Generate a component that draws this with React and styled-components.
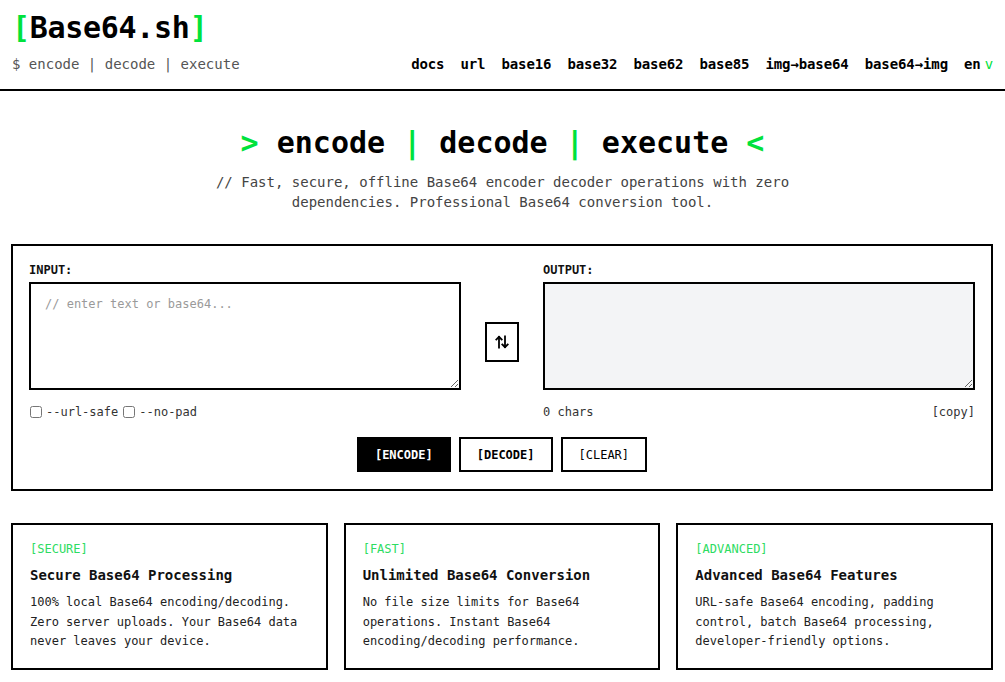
import React from 'react'
import styled, { createGlobalStyle } from 'styled-components'

const GREEN = '#00e23c'
const MONO = '"DejaVu Sans Mono", "Liberation Mono", monospace'

const Global = createGlobalStyle`
	html, body {
		margin: 0;
		padding: 0;
		background: #fff;
	}

	body {
		font-family: ${MONO};
		color: #111;
	}

	* {
		box-sizing: border-box;
	}
`

const Header = styled.header`
	display: flex;
	justify-content: space-between;
	align-items: flex-end;
	padding: 10px 12px 15px;
	border-bottom: 2px solid #000;
`

const Brand = styled.div`
	display: flex;
	flex-direction: column;
	gap: 8px;
`

const Logo = styled.div`
	font-size: 30px;
	line-height: 36px;
	font-weight: 700;
	color: #000;
	letter-spacing: -0.3px;

	span {
		color: ${GREEN};
	}
`

const Tagline = styled.div`
	font-size: 14px;
	line-height: 20px;
	color: #555;
`

const Nav = styled.nav`
	display: flex;
	gap: 16px;
	font-size: 14px;
	line-height: 20px;
	font-weight: 700;
	letter-spacing: -0.1px;
`

const NavLink = styled.a`
	color: #000;
	text-decoration: none;

	em {
		font-style: normal;
		font-weight: 400;
		color: ${GREEN};
		margin-left: 4px;
	}
`

const Hero = styled.section`
	display: flex;
	flex-direction: column;
	align-items: center;
	padding: 34px 0 32px;
	text-align: center;
`

const Title = styled.h1`
	margin: 0;
	font-size: 30px;
	line-height: 36px;
	font-weight: 700;
	color: #000;

	span {
		color: ${GREEN};
	}
`

const Subtitle = styled.p`
	margin: 11px 0 0;
	max-width: 590px;
	font-size: 14px;
	line-height: 20px;
	color: #444;
`

const Main = styled.main`
	padding: 0 12px 12px 11px;
`

const Panel = styled.section`
	border: 2px solid #000;
	padding: 16px 16px 17px;
`

const Grid = styled.div`
	display: grid;
	grid-template-columns: 1fr auto 1fr;
	gap: 24px;
`

const Column = styled.div`
	display: flex;
	flex-direction: column;
`

const Label = styled.label`
	font-size: 12px;
	line-height: 16px;
	font-weight: 700;
	margin-bottom: 4px;
`

const TextArea = styled.textarea`
	width: 100%;
	height: 108px;
	border: 2px solid #000;
	border-radius: 0;
	padding: 12px 14px;
	font-family: ${MONO};
	font-size: 12px;
	line-height: 16px;
	color: #111;
	background: ${p => (p.readOnly ? '#f3f4f6' : '#fff')};
	resize: vertical;
	outline: none;

	&::placeholder {
		color: #9a9a9a;
	}
`

const Options = styled.div`
	display: flex;
	justify-content: space-between;
	align-items: center;
	margin-top: 14px;
	height: 16px;
	font-size: 12px;
	color: #333;
`

const Checks = styled.div`
	display: flex;
	align-items: center;
	gap: 4px;
`

const Check = styled.label`
	display: flex;
	align-items: center;

	input {
		margin: 0 4px 0 1px;
		width: 12px;
		height: 12px;
	}
`

const CopyLink = styled.span`
	color: #333;
`

const SwapButton = styled.button`
	align-self: center;
	width: 34px;
	height: 40px;
	margin-top: 2px;
	border: 2px solid #000;
	background: #fff;
	display: flex;
	align-items: center;
	justify-content: center;
	padding: 0;
`

const Actions = styled.div`
	display: flex;
	justify-content: center;
	gap: 8px;
	margin-top: 17px;
`

const ActionButton = styled.button`
	height: 35px;
	padding: 0 16px;
	border: 2px solid #000;
	background: ${p => (p.$primary ? '#000' : '#fff')};
	color: ${p => (p.$primary ? '#fff' : '#000')};
	font-family: ${MONO};
	font-size: 12px;
	font-weight: ${p => (p.$light ? 400 : 700)};
`

const Features = styled.section`
	display: grid;
	grid-template-columns: repeat(3, 1fr);
	gap: 16px;
	margin-top: 32px;
`

const Card = styled.article`
	border: 2px solid #000;
	padding: 16px 17px 16px;
`

const Tag = styled.div`
	font-size: 12px;
	line-height: 16px;
	color: #2ddc62;
`

const CardTitle = styled.h3`
	margin: 8px 0 8px;
	font-size: 14px;
	line-height: 20px;
	font-weight: 700;
`

const CardText = styled.p`
	margin: 0;
	font-size: 12px;
	line-height: 19.5px;
	color: #222;
`

function SwapIcon() {
	return (
		<svg width="14" height="14" viewBox="0 0 14 14" fill="none" stroke="#000" strokeWidth="1.8" strokeLinecap="square">
			<path d="M4 12.5V2" />
			<path d="M1.3 4.6L4 1.8l2.7 2.8" />
			<path d="M10 1.5V12" />
			<path d="M7.3 9.4L10 12.2l2.7-2.8" />
		</svg>
	)
}

const navItems = ['docs', 'url', 'base16', 'base32', 'base62', 'base85', 'img→base64', 'base64→img']

const features = [
	{
		tag: '[SECURE]',
		title: 'Secure Base64 Processing',
		text: '100% local Base64 encoding/decoding. Zero server uploads. Your Base64 data never leaves your device.',
	},
	{
		tag: '[FAST]',
		title: 'Unlimited Base64 Conversion',
		text: 'No file size limits for Base64 operations. Instant Base64 encoding/decoding performance.',
	},
	{
		tag: '[ADVANCED]',
		title: 'Advanced Base64 Features',
		text: 'URL-safe Base64 encoding, padding control, batch Base64 processing, developer-friendly options.',
	},
]

function App() {
	return (
		<>
			<Global />
			<Header>
				<Brand>
					<Logo><span>[</span>Base64.sh<span>]</span></Logo>
					<Tagline>$ encode | decode | execute</Tagline>
				</Brand>
				<Nav>
					{navItems.map(item => (
						<NavLink key={item} href="#">{item}</NavLink>
					))}
					<NavLink href="#">en<em>v</em></NavLink>
				</Nav>
			</Header>

			<Hero>
				<Title>
					<span>&gt;</span> encode <span>|</span> decode <span>|</span> execute <span>&lt;</span>
				</Title>
				<Subtitle>
					// Fast, secure, offline Base64 encoder decoder operations with zero dependencies. Professional Base64 conversion tool.
				</Subtitle>
			</Hero>

			<Main>
				<Panel>
					<Grid>
						<Column>
							<Label>INPUT:</Label>
							<TextArea placeholder="// enter text or base64..." />
							<Options>
								<Checks>
									<Check><input type="checkbox" />--url-safe</Check>
									<Check><input type="checkbox" />--no-pad</Check>
								</Checks>
							</Options>
						</Column>
						<SwapButton aria-label="swap"><SwapIcon /></SwapButton>
						<Column>
							<Label>OUTPUT:</Label>
							<TextArea readOnly />
							<Options>
								<span>0 chars</span>
								<CopyLink>[copy]</CopyLink>
							</Options>
						</Column>
					</Grid>
					<Actions>
						<ActionButton $primary>[ENCODE]</ActionButton>
						<ActionButton>[DECODE]</ActionButton>
						<ActionButton $light>[CLEAR]</ActionButton>
					</Actions>
				</Panel>

				<Features>
					{features.map(f => (
						<Card key={f.tag}>
							<Tag>{f.tag}</Tag>
							<CardTitle>{f.title}</CardTitle>
							<CardText>{f.text}</CardText>
						</Card>
					))}
				</Features>
			</Main>
		</>
	)
}

export default App
